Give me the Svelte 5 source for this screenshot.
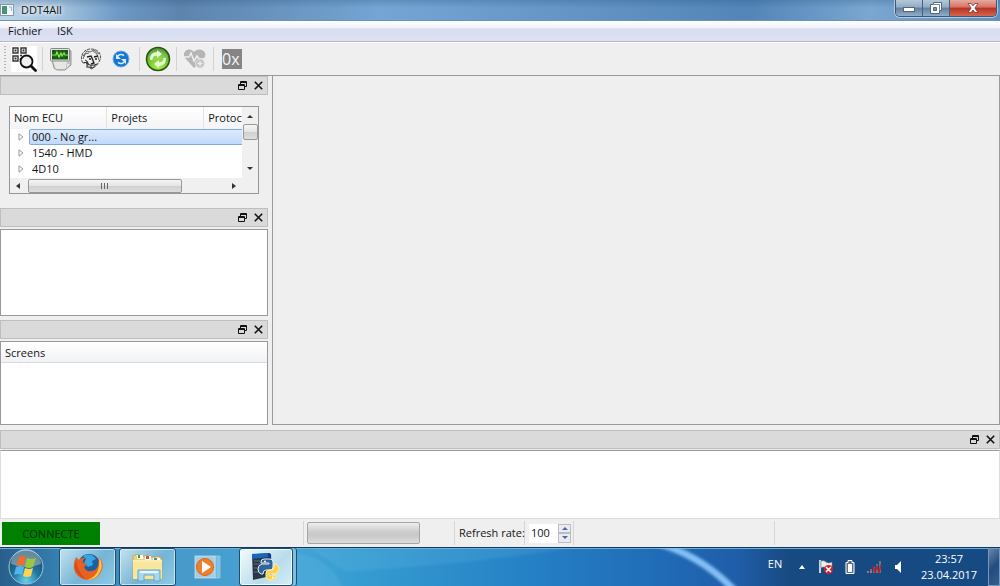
<script lang="ts">
	let groups = $state([
		{ name: '000 - No gr...', selected: true },
		{ name: '1540 - HMD', selected: false },
		{ name: '4D10', selected: false }
	]);

	let refreshRate = $state(100);

	function select(index: number) {
		groups.forEach((group, i) => (group.selected = i === index));
	}
</script>

{#snippet dockTitle(name: string)}
	<header class="dock-title">
		<button type="button" aria-label="Float {name}">
			<svg width="9" height="9" viewBox="0 0 9 9" fill="none" stroke="#111">
				<path d="M2.5 3V.5h6v5H6.5M2.5 1.5h6M.5 3.5h6v5h-6zM.5 4.5h6" />
			</svg>
		</button>
		<button type="button" aria-label="Close {name}">
			<svg width="9" height="9" viewBox="0 0 9 9" stroke="#111" stroke-width="1.6">
				<path d="M.8.8l7.4 7.4M8.2.8L.8 8.2" />
			</svg>
		</button>
	</header>
{/snippet}

<div class="desktop">
	<div class="titlebar">
		<svg class="app-icon" width="14" height="12" viewBox="0 0 14 12">
			<rect x=".5" y=".5" width="13" height="11" fill="#f5f8f8" stroke="#8599a5" />
			<rect x="2" y="2" width="5" height="8" fill="#4a9277" />
			<path d="M9 3h3M11.5 3v4" stroke="#9bb" />
		</svg>
		<h1>DDT4All</h1>
		<div class="window-buttons">
			<button type="button" class="minimize" aria-label="Minimize">
				<svg width="12" height="10" viewBox="0 0 12 10">
					<rect x=".5" y="4.5" width="11" height="4" fill="#fff" stroke="#52677c" />
				</svg>
			</button>
			<button type="button" class="restore" aria-label="Restore">
				<svg width="12" height="12" viewBox="0 0 12 12">
					<path d="M3.5.5h8v8h-2v3h-9v-9h3z" fill="#fff" stroke="#52677c" />
					<path d="M3.5 5.5h3v3h-3z" fill="#7894ad" stroke="#52677c" />
					<path d="M3 2.5h6.5V8" fill="none" stroke="#72879b" />
				</svg>
			</button>
			<button type="button" class="close" aria-label="Close">
				<svg width="12" height="10" viewBox="0 0 12 10">
					<path
						d="M1 .5h3l2 2.4L8 .5h3L7.8 5 11 9.500H8L6 7.100 4 9.500H1L4.200 5z"
						fill="#fff"
						stroke="#6d2b25"
						stroke-width=".7"
					/>
				</svg>
			</button>
		</div>
	</div>

	<nav class="menubar">
		<button type="button">Fichier</button>
		<button type="button">ISK</button>
	</nav>

	<div class="toolbar" role="toolbar" aria-label="Tools">
		<span class="grip"></span>
		<button type="button" aria-label="Scan ECUs">
			<svg width="26" height="26" viewBox="0 0 26 26">
				<rect width="26" height="26" fill="#fff" />
				<g fill="none" stroke="#333" stroke-width="1.4">
					<path d="M2 2h5v5H2zM10 2h5v5h-5zM2 10h5v5H2z" />
					<path d="M3.500 4.500h2M11.500 4.500h2M3.500 12.500h2" stroke-width="2" />
					<path d="M9 9.500h3M9.500 12v3" stroke-dasharray="2 1" />
				</g>
				<circle cx="15.500" cy="15.500" r="6" fill="#eef0f1" stroke="#111" stroke-width="1.800" />
				<path d="M20 20l4.500 4.500" stroke="#111" stroke-width="2.800" stroke-linecap="round" />
			</svg>
		</button>
		<span class="separator"></span>
		<button type="button" aria-label="Diagnostic tool">
			<svg width="24" height="24" viewBox="0 0 24 24">
				<path d="M3 13l2 8q1 2 4 2h7l6-5V4l-2-2z" fill="#c4c7c4" stroke="#959995" />
				<path d="M4 14h14l-1 8H7z" fill="#e6e8e4" />
				<path d="M17 22l1-5 4-1z" fill="#fafafa" stroke="#aaa" stroke-width=".6" />
				<rect x="1.500" y="1.500" width="19" height="12.500" rx="1" fill="#e4e6e1" stroke="#858985" />
				<rect x="3" y="3" width="16" height="9.500" fill="#175413" />
				<path d="M3 6h16M3 9h16M7 3v9M11 3v9M15 3v9" stroke="#397d2c" stroke-width=".6" />
				<path d="M3 8h4l1-3 2 5 2-4 1 3 2-3 1 2h3" fill="none" stroke="#87ee53" stroke-width="1.200" />
			</svg>
		</button>
		<button type="button" aria-label="Expert mode">
			<svg width="24" height="24" viewBox="0 0 24 24" fill="none" stroke="#444">
				<path
					d="M4 16C0 10 4 2 12 2c7 0 11 5 9 11l-3 5-5 4-4-2-1-5-4 1z"
					fill="#eee"
					stroke-dasharray="3 1"
				/>
				<path d="M4 9l4-5 3 1 4-2 5 4M4 12l2-5 4-1M18 7l2 6M3 8l3 1M14 4l4 3" stroke="#666" />
				<path d="M8 10l4-1 1 2M15 10l4-1M10 12h2M16 12h2M13 11l2 5-3 1" stroke="#222" stroke-width="1.400" />
				<path d="M7 16q5 4 11 1M8 14l2 4M10 20l4 1 3-4M6 13l2 1M5 16l3-1v6M12 18v3" stroke="#333" />
			</svg>
		</button>
		<button type="button" aria-label="Refresh">
			<svg width="18" height="18" viewBox="0 0 18 18" fill="none">
				<circle cx="9" cy="9" r="8" fill="#1476cf" stroke="#75ace0" />
				<path d="M4.500 8.500A4.500 4.500 0 0 1 12 5.700M13.500 9.500A4.500 4.500 0 0 1 6 12.300" stroke="#d9ecfb" stroke-width="1.600" />
				<path d="M4 4v5h5zM14 14V9H9z" fill="#d9ecfb" />
			</svg>
		</button>
		<span class="separator"></span>
		<button type="button" aria-label="Reload screen">
			<svg width="26" height="26" viewBox="0 0 26 26">
				<defs>
					<radialGradient id="reload-green" cx=".5" cy=".8" r=".8">
						<stop offset="0" stop-color="#b4ee51" />
						<stop offset=".65" stop-color="#64ba28" />
						<stop offset="1" stop-color="#27720d" />
					</radialGradient>
				</defs>
				<circle cx="13" cy="13" r="11.500" fill="url(#reload-green)" stroke="#26550f" stroke-width="1.500" />
				<path d="M3 12a10 10 0 0 1 20 0Q13 15 3 12z" fill="#fff" opacity=".18" />
				<path d="M5 14Q5 6 12 6V4l5 4-5 4v-2Q8 9 7.500 14z" fill="#e3fbcf" />
				<path d="M21 12q0 8-7 8v2l-5-4 5-4v2q4 1 4.500-4z" fill="#e3fbcf" />
			</svg>
		</button>
		<span class="separator"></span>
		<button type="button" aria-label="Tester presence">
			<svg width="24" height="22" viewBox="0 0 24 22" fill="none">
				<path d="M11 20L2 10C-2 4 6-2 11 4c5-6 15 0 10 6z" fill="#b5b5b5" />
				<path d="M1 9h5l2-4 3 8 3-5 2 3h6" stroke="#eee" stroke-width="1.500" />
				<circle cx="17" cy="15.500" r="4.500" fill="#c2c2c2" stroke="#e6e6e6" />
				<path d="M17 13v5M14.500 15.500h5" stroke="#eee" stroke-width="1.300" />
			</svg>
		</button>
		<span class="separator"></span>
		<button type="button" class="hex" aria-label="Hex command">0x</button>
	</div>

	<main class="workspace">
		<aside class="docks">
			<section class="dock">
				{@render dockTitle('ECU list')}
				<div class="tree">
					<div class="tree-view">
						<table>
							<thead>
								<tr><th>Nom ECU</th><th>Projets</th><th>Protoc</th></tr>
							</thead>
							<tbody>
								{#each groups as group, i}
									<tr class:selected={group.selected} onclick={() => select(i)}>
										<td colspan="3">
											<div class="tree-row">
												<svg width="6" height="8" viewBox="0 0 6 8" fill="#fff" stroke="#999">
													<path d="M1 .8L5 4 1 7.200z" />
												</svg>
												<span>{group.name}</span>
											</div>
										</td>
									</tr>
								{/each}
							</tbody>
						</table>
					</div>
					<div class="scroll vertical">
						<svg width="6" height="3" viewBox="0 0 6 3"><path d="M0 3l3-3 3 3z" fill="#333" /></svg>
						<span class="thumb"></span>
						<svg width="6" height="3" viewBox="0 0 6 3"><path d="M0 0l3 3 3-3z" fill="#333" /></svg>
					</div>
					<div class="scroll horizontal">
						<svg width="4" height="6" viewBox="0 0 4 6"><path d="M4 0L0 3l4 3z" fill="#333" /></svg>
						<span class="thumb">
							<svg width="8" height="6" viewBox="0 0 8 6" stroke="#666"><path d="M.5 0v6M3.500 0v6M6.500 0v6" /></svg>
						</span>
						<svg width="4" height="6" viewBox="0 0 4 6"><path d="M0 0l4 3-4 3z" fill="#333" /></svg>
					</div>
				</div>
			</section>
			<section class="dock">
				{@render dockTitle('ECU files')}
				<div class="pane"></div>
			</section>
			<section class="dock fill">
				{@render dockTitle('Screens')}
				<div class="pane"><h2>Screens</h2></div>
			</section>
		</aside>
		<div class="canvas"></div>
	</main>

	<section class="log">
		{@render dockTitle('Log')}
		<div class="log-view"></div>
	</section>

	<footer class="statusbar">
		<div class="cell status"><span>CONNECTE</span></div>
		<div class="cell progress"><progress value="0" max="100" aria-label="Progress"></progress></div>
		<div class="cell rate-label"><label for="rate">Refresh rate:</label></div>
		<div class="cell rate">
			<div class="spinbox">
				<input id="rate" type="number" bind:value={refreshRate} />
				<div class="steps">
					<button type="button" aria-label="Increase" onclick={() => (refreshRate += 1)}>
						<svg width="6" height="3" viewBox="0 0 6 3"><path d="M0 3l3-3 3 3z" fill="#52699e" /></svg>
					</button>
					<button type="button" aria-label="Decrease" onclick={() => (refreshRate -= 1)}>
						<svg width="6" height="3" viewBox="0 0 6 3"><path d="M0 0l3 3 3-3z" fill="#52699e" /></svg>
					</button>
				</div>
			</div>
		</div>
		<div class="cell spare"></div>
	</footer>

	<div class="taskbar">
		<svg class="swoosh" viewBox="0 0 1000 39" preserveAspectRatio="none" fill="none" aria-hidden="true">
			<defs>
				<filter id="soften"><feGaussianBlur stdDeviation="1.5" /></filter>
			</defs>
			<path d="M290 3Q335 10 344 45H290z" fill="#6fc4e8" opacity=".2" filter="url(#soften)" />
			<path d="M345 24Q460 18 570 0H420Q360 3 310 0z" fill="#8fd6f4" opacity=".12" filter="url(#soften)" />
			<path d="M660-4Q702 9 734 43" stroke="#82bff4" stroke-width="7" filter="url(#soften)" />
		</svg>

		<button type="button" class="start" aria-label="Start">
			<svg width="38" height="38" viewBox="0 0 38 38">
				<defs>
					<radialGradient id="orb" cx=".5" cy=".9" r=".8">
						<stop offset="0" stop-color="#62d2ee" />
						<stop offset=".5" stop-color="#20749f" />
						<stop offset="1" stop-color="#214a66" />
					</radialGradient>
				</defs>
				<circle cx="19" cy="19" r="17" fill="url(#orb)" stroke="#9cc6d9" />
				<path d="M4 16a15 15 0 0 1 30 0Q19 22 4 16z" fill="#d5e8ef" opacity=".4" />
				<path d="M12 9q4-2 7 0l-2 9q-4-2-8 0z" fill="#ef6b30" />
				<path d="M20 10q4 2 9 0l-3 9q-4 2-8 0z" fill="#9aca3c" />
				<path d="M9 19q4-2 8 0l-2 8q-4-2-8 0z" fill="#54b5ee" />
				<path d="M18 20q4 2 8 0l-2 8q-4 2-8 0z" fill="#ffd34d" />
			</svg>
		</button>
		<button type="button" class="task open" aria-label="Firefox">
			<svg width="30" height="30" viewBox="0 0 30 30">
				<circle cx="16" cy="13" r="11" fill="#1b5fa4" />
				<path d="M10 4q8-4 13 3l-4 2 1 4-5 2-4-4 2-4z" fill="#3ba6dc" />
				<path
					d="M3 5l3 3q3-3 6-2-3 2-2 5l4 1-3 3q2 5 7 4 5 0 7-5l1-9q6 7 2 15-5 9-14 8Q3 26 1 17 0 11 3 5z"
					fill="#e86121"
				/>
				<path d="M26 5q5 8 1 15-4 8-13 8 9-3 11-10 2-6 1-13z" fill="#ffc83d" />
				<path d="M3 8q-3 9 2 14 3 4 7 5-8-9-9-19z" fill="#d24a20" />
			</svg>
		</button>
		<button type="button" class="task open" aria-label="Explorer">
			<svg width="34" height="30" viewBox="0 0 34 30">
				<path d="M2 4l5-2 3 2h4l3-1 3 2h4l3-1 4 3v20H2z" fill="#ecd479" stroke="#bd9e4b" stroke-width=".7" />
				<path d="M6 3h6v4H6zM14 4h6v4h-6zM22 6h7v3h-7z" fill="#fff" />
				<path d="M7 3h2v3H7z" fill="#3a9b43" />
				<path d="M15 4h3v3h-3z" fill="#d44d3f" />
				<path d="M23 6h3v2h-3z" fill="#5090ad" />
				<path d="M2 8h29v19H2z" fill="#f8e69d" />
				<path d="M2 9h29" stroke="#fff6c9" />
				<path d="M7 29V18h22v11h-6v-6H13v6z" fill="#a7d9ed" stroke="#62a6cc" />
				<path d="M9 20h18" stroke="#e5f7fc" stroke-width="2" />
			</svg>
		</button>
		<button type="button" class="task" aria-label="Media Player">
			<svg width="28" height="26" viewBox="0 0 28 26">
				<path d="M21 2h5v22h-5zM24 3v21" fill="#6fb8de" stroke="#b5dcef" stroke-width=".6" />
				<rect x="1" y="2" width="20" height="22" fill="#a5cce1" stroke="#cee6f1" stroke-width=".7" />
				<circle cx="11" cy="13" r="8.500" fill="#ee8029" stroke="#d8671c" />
				<path d="M8 7l9 6-9 6z" fill="#fff" />
			</svg>
		</button>
		<button type="button" class="task open stacked" aria-label="Python">
			<svg width="32" height="32" viewBox="0 0 32 32">
				<path d="M2 3l18-1 1 23-18 4z" fill="#273748" />
				<path d="M2 3l18-1v4L2 8z" fill="#1866bf" />
				<path d="M18 2l3 1 1 21-3 1z" fill="#123a87" />
				<path d="M4 10h12M4 13h10M4 17h6M4 21h8" stroke="#617182" />
				<path d="M14 8h6q3 0 3 3v5q0 3-3 3h-4q-3 0-3 4h-2q-3-1-3-5t4-5h7v-1h-8v-1q0-3 3-3z" fill="#2f659b" stroke="#e4edf2" />
				<path d="M24 13h2q3 1 3 5t-4 5h-6v1h7v2q0 3-5 3t-5-3v-4q0-3 3-3h3q2 0 2-3z" fill="#ffd33d" stroke="#f3edd0" />
				<circle cx="15" cy="10.500" r="1" fill="#fff" />
				<circle cx="23" cy="26.500" r="1" fill="#fff" />
			</svg>
		</button>

		<div class="tray">
			<button type="button" class="language">EN</button>
			<button type="button" aria-label="Show hidden icons">
				<svg width="6" height="4" viewBox="0 0 6 4"><path d="M0 4l3-4 3 4z" fill="#fff" /></svg>
			</button>
			<button type="button" aria-label="Action center">
				<svg width="16" height="16" viewBox="0 0 16 16">
					<path d="M2 1v13" stroke="#fff" stroke-width="1.500" />
					<path d="M3 2q3-1 5 1t6 0v7q-3 1-6-1t-5 0z" fill="#eee" stroke="#6d7c89" stroke-width=".6" />
					<circle cx="10.500" cy="10.500" r="4.500" fill="#d3232a" />
					<path d="M8 8l5 5M13 8l-5 5" stroke="#fff" stroke-width="1.500" />
				</svg>
			</button>
			<button type="button" aria-label="Battery">
				<svg width="10" height="16" viewBox="0 0 10 16">
					<path d="M3 1.500h4v2h2v11H1v-11h2z" fill="#596f86" stroke="#fff" />
					<path d="M3 5h4v8H3z" fill="#fff" />
				</svg>
			</button>
			<button type="button" aria-label="Network">
				<svg width="16" height="14" viewBox="0 0 16 14">
					<path d="M1 11h2v2H1zM4 9h2v4H4zM7 7h2v6H7zM10 4h2v9h-2zM13 1h2v12h-2z" fill="#62788d" />
					<path d="M1 12h2M4 12h2" stroke="#e9706e" />
					<path d="M7 6l2 6 2-5 2 5 2-7" fill="none" stroke="#b32232" stroke-width="1.600" />
				</svg>
			</button>
			<button type="button" aria-label="Volume">
				<svg width="8" height="14" viewBox="0 0 8 14"><path d="M1 5h2l4-4v12L3 9H1z" fill="#fff" /></svg>
			</button>
		</div>
		<div class="clock"><time>23:57</time><time datetime="2017-04-23">23.04.2017</time></div>
		<button type="button" class="show-desktop" aria-label="Show desktop"></button>
	</div>
</div>

<style>
	:global(body) {
		margin: 0;
	}

	.desktop {
		display: flex;
		flex-direction: column;
		min-height: 100vh;
		background: #efefef;
		color: #151515;
		font-family: 'Open Sans', 'Noto Sans', sans-serif;
		font-size: 11px;
		line-height: 16px;
	}

	.desktop,
	.desktop * {
		box-sizing: border-box;
	}

	button {
		display: flex;
		align-items: center;
		justify-content: center;
		padding: 0;
		border: 0;
		background: none;
		color: inherit;
		font: inherit;
	}

	svg {
		display: block;
		flex-shrink: 0;
	}

	h1,
	h2 {
		margin: 0;
		font: inherit;
	}

	/* Window frame */
	.titlebar {
		display: flex;
		align-items: center;
		gap: 7px;
		height: 21px;
		border-bottom: 1px solid #6d94b4;
		background:
			linear-gradient(rgb(20 60 110 / 20%), transparent 40%),
			linear-gradient(90deg, #bdd5e8, #a5c4df 6%, #6c98c5 12%, #5d84ad 18%, #74a5d3 38%, #5485b8 75%, #79a7d1 87%, #628fb9);
	}

	.titlebar h1 {
		text-shadow:
			0 0 4px #fff,
			0 0 6px #fff;
	}

	.window-buttons {
		display: flex;
		align-self: flex-start;
		margin-left: auto;
		margin-right: 3px;
		border: 1px solid #3f5874;
		border-top: 0;
		border-radius: 0 0 5px 5px;
		overflow: hidden;
		box-shadow: 0 0 0 1px rgb(220 235 248 / 60%);
	}

	.window-buttons button {
		width: 27px;
		height: 16px;
		border-right: 1px solid #47617d;
		background: linear-gradient(#b5c8da, #91abc4 45%, #637f9e 50%, #8eaecc);
	}

	.window-buttons .close {
		width: 46px;
		border-right: 0;
		background: linear-gradient(#e5aaa0, #d77362 45%, #b63122 50%, #d8664b);
	}

	.menubar {
		display: flex;
		height: 21px;
		padding-left: 8px;
		gap: 15px;
		border-bottom: 1px solid #b4b8c3;
		background: linear-gradient(#fff, #eef1fa 35%, #d7dcef 40%, #dde3f4);
	}

	.toolbar {
		display: flex;
		align-items: center;
		height: 33px;
		padding-left: 4px;
		border-top: 1px solid #fff;
		gap: 4px;
	}

	.grip {
		width: 2px;
		height: 26px;
		margin-right: 1px;
		background: repeating-linear-gradient(#b5b5b5 0 1px, transparent 1px 3px);
	}

	.separator {
		width: 1px;
		height: 24px;
		margin: 0 1px;
		background: #d3d3d3;
	}

	.toolbar button {
		min-width: 26px;
		height: 26px;
	}

	.toolbar .hex {
		align-self: center;
		justify-content: flex-start;
		width: 20px;
		min-width: 20px;
		height: 20px;
		margin-left: 3px;
		background: #858585;
		color: #f5f5f5;
		font-size: 16px;
		line-height: 24px;
	}

	/* Dock widgets */
	.workspace {
		display: flex;
		flex: 1;
		gap: 4px;
		border-top: 1px solid #999;
	}

	.docks {
		display: flex;
		flex-direction: column;
		width: 268px;
		gap: 4px;
	}

	.dock {
		display: flex;
		flex-direction: column;
	}

	.dock.fill {
		flex: 1;
	}

	.dock-title {
		display: flex;
		align-items: center;
		justify-content: flex-end;
		gap: 5px;
		height: 19px;
		padding-right: 3px;
		border: 1px solid #bebebe;
		background: #dadada;
	}

	.dock-title button {
		width: 11px;
		height: 13px;
	}

	.pane {
		flex: 1;
		min-height: 87px;
		margin-top: 2px;
		border: 1px solid #999;
		background: #fff;
	}

	.fill .pane {
		min-height: 80px;
	}

	.pane h2 {
		height: 21px;
		padding: 3px 4px;
		border-bottom: 1px solid #d9dbe0;
		background: linear-gradient(#fff, #f1f2f4);
	}

	.canvas {
		flex: 1;
		border: 1px solid #999;
		border-top: 0;
	}

	.tree {
		display: grid;
		grid-template: 71px 15px / 1fr 16px;
		margin: 11px 9px 10px;
		border: 1px solid #969696;
		background: #f0f0f0;
	}

	.tree-view {
		overflow: hidden;
		background: #fff;
	}

	table {
		width: 291px;
		table-layout: fixed;
		border-collapse: collapse;
	}

	th {
		height: 22px;
		padding: 0 4px;
		border-right: 1px solid #e2e3e7;
		background: linear-gradient(#fff, #f3f4f6);
		font-weight: normal;
		text-align: left;
	}

	td {
		padding: 0;
	}

	.tree-row {
		display: flex;
		align-items: center;
		gap: 5px;
		padding-left: 8px;
	}

	.tree-row span {
		flex: 1;
		padding-left: 2px;
		border: 1px solid transparent;
		line-height: 14px;
	}

	.selected .tree-row span {
		border-color: #83abd9;
		border-radius: 2px;
		background: linear-gradient(#dceafc, #c0dafa);
	}

	.scroll {
		display: flex;
		align-items: center;
	}

	.vertical {
		flex-direction: column;
		padding: 8px 0;
	}

	.vertical .thumb {
		width: 15px;
		height: 16px;
		margin: 6px 0 auto;
	}

	.horizontal {
		padding: 0 6px;
	}

	.thumb {
		display: flex;
		align-items: center;
		justify-content: center;
		border: 1px solid #999;
		border-radius: 2px;
		background: linear-gradient(#f5f5f5, #e5e5e5 48%, #d0d0d0 52%, #dedede);
	}

	.horizontal .thumb {
		width: 154px;
		height: 14px;
		margin: 0 auto 0 8px;
	}

	.log {
		margin-top: 5px;
	}

	.log-view {
		height: 69px;
		margin-top: 1px;
		border: 1px solid #ddd;
		border-top-color: #999;
		background: #fff;
	}

	/* Status bar */
	.statusbar {
		display: flex;
		height: 28px;
		padding: 2px 0;
	}

	.cell {
		display: flex;
		align-items: center;
		border-right: 1px solid #d5d5d5;
	}

	.status {
		width: 304px;
		padding-left: 2px;
	}

	.status span {
		width: 98px;
		height: 23px;
		background: #008000;
		color: #052c05;
		line-height: 23px;
		text-align: center;
	}

	.progress {
		width: 151px;
		padding-left: 3px;
	}

	progress {
		width: 113px;
		height: 22px;
		border: 1px solid #a5a5a5;
		border-radius: 2px;
		appearance: none;
		background: linear-gradient(#eee, #cfcfcf 40%, #c8c8c8 60%, #dcdcdc);
	}

	progress::-webkit-progress-bar {
		background: none;
	}

	.rate-label {
		width: 70px;
		padding-left: 4px;
		white-space: nowrap;
	}

	.rate {
		width: 49px;
		padding-left: 4px;
	}

	.spinbox {
		display: flex;
		width: 42px;
		height: 19px;
		background: #fff;
	}

	.spinbox input {
		flex: 1;
		min-width: 0;
		padding: 0 2px;
		border: 0;
		background: none;
		color: inherit;
		font: inherit;
		appearance: textfield;
	}

	.spinbox input::-webkit-inner-spin-button {
		display: none;
	}

	.steps {
		display: flex;
		flex-direction: column;
		width: 13px;
	}

	.steps button {
		flex: 1;
		border: 1px solid #b9bdc7;
		background: #e9ebf0;
	}

	.spare {
		flex: 1;
		max-width: 201px;
	}

	/* Taskbar */
	.taskbar {
		position: relative;
		display: flex;
		height: 39px;
		border-top: 1px solid #12395b;
		box-shadow: inset 0 1px #70aed5;
		background: linear-gradient(90deg, #285e8c, #3581b2 6%, #479aca 18%, #46a4d6 28%, #359cd1 36%, #247fc4 54%, #206bb7 66%, #1f5da7 74%, #174a80 79%, #164a83);
		color: #fff;
	}

	.swoosh {
		position: absolute;
		inset: 0;
		width: 100%;
		height: 100%;
	}

	.taskbar button,
	.clock {
		position: relative;
	}

	.start {
		width: 52px;
		margin-right: 7px;
	}

	.task {
		width: 57px;
		margin-right: 3px;
	}

	.open {
		border: 1px solid #1d4d70;
		border-radius: 3px;
		background: linear-gradient(135deg, #c3e2ef, #75b4d5 55%, #8ecbe7);
		box-shadow: inset 0 0 0 1px rgb(225 244 252 / 70%);
	}

	.stacked {
		width: 54px;
		background: linear-gradient(135deg, #f3fbfd, #b9dcea 60%, #d3eef7);
		box-shadow:
			inset 0 0 0 1px #f0fbff,
			3px 0 #81bedc,
			4px 0 #1d4d70;
	}

	.tray {
		display: flex;
		align-items: center;
		margin-left: auto;
	}

	.tray button {
		width: 24px;
		height: 20px;
	}

	.tray .language {
		width: 30px;
		margin-bottom: 6px;
	}

	.clock {
		display: flex;
		flex-direction: column;
		justify-content: center;
		width: 78px;
		line-height: 16px;
		text-align: center;
	}

	.show-desktop {
		width: 12px;
		border: 1px solid #7699bb;
		background: linear-gradient(135deg, #6585ab, #234b7e 50%, #335e92);
	}
</style>
